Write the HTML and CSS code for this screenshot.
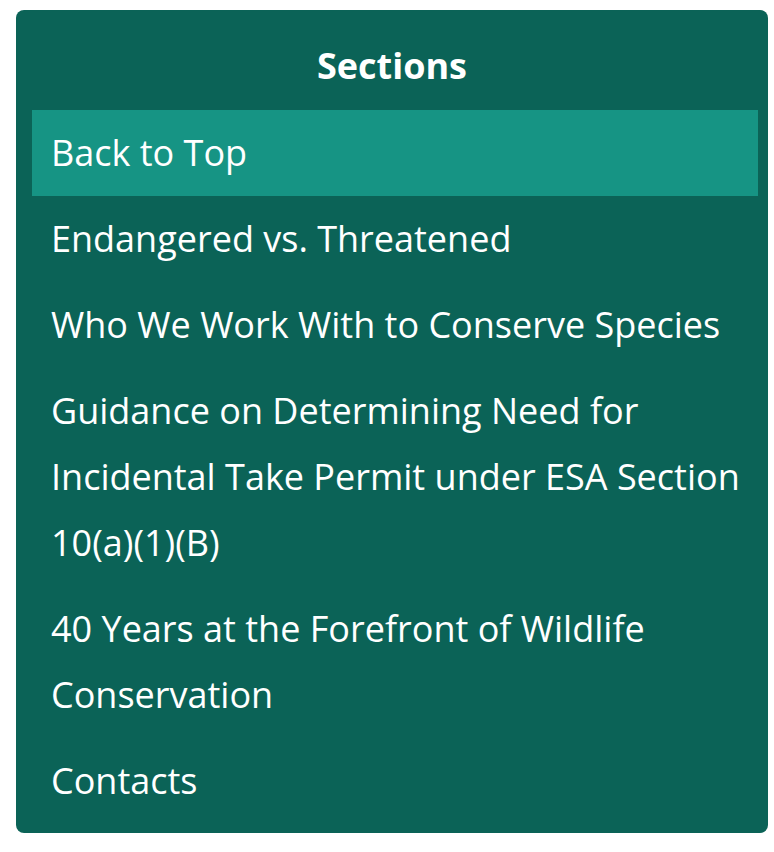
FILE: index.html
```html
<!DOCTYPE html>
<html lang="en">
<head>
<meta charset="utf-8">
<title>Sections</title>
<link rel="stylesheet" href="styles.css">
</head>
<body>
<nav class="toc">
  <h2 class="toc-title">Sections</h2>
  <ul class="toc-list">
    <li class="toc-item active"><a href="#">Back to Top</a></li>
    <li class="toc-item"><a href="#">Endangered vs. Threatened</a></li>
    <li class="toc-item"><a href="#">Who We Work With to Conserve Species</a></li>
    <li class="toc-item"><a href="#">Guidance on Determining Need for Incidental Take Permit under ESA Section 10(a)(1)(B)</a></li>
    <li class="toc-item"><a href="#">40 Years at the Forefront of Wildlife Conservation</a></li>
    <li class="toc-item"><a href="#">Contacts</a></li>
  </ul>
</nav>
</body>
</html>
```
FILE: styles.css
```css
html, body {
  margin: 0;
  padding: 0;
  background: #ffffff;
}
body {
  padding: 10px 6px 0 16px;
  font-family: "Open Sans", "Noto Sans", sans-serif;
}
.toc {
  background: #0b6357;
  border-radius: 8px;
  width: 752px;
  box-sizing: border-box;
  padding: 0 10px 9px 16px;
  color: #ffffff;
}
.toc-title {
  margin: 0 -10px 0 -16px;
  height: 100px;
  display: flex;
  align-items: center;
  justify-content: center;
  font-size: 36px;
  font-weight: 700;
  padding-top: 10px;
  box-sizing: border-box;
}
.toc-list {
  list-style: none;
  margin: 0;
  padding: 0;
}
.toc-item {
  padding: 10px 6px 10px 19px;
  font-size: 36px;
  line-height: 66px;
}
.toc-item.active {
  background: #169484;
}
.toc-item a {
  color: #ffffff;
  text-decoration: none;
}
```
